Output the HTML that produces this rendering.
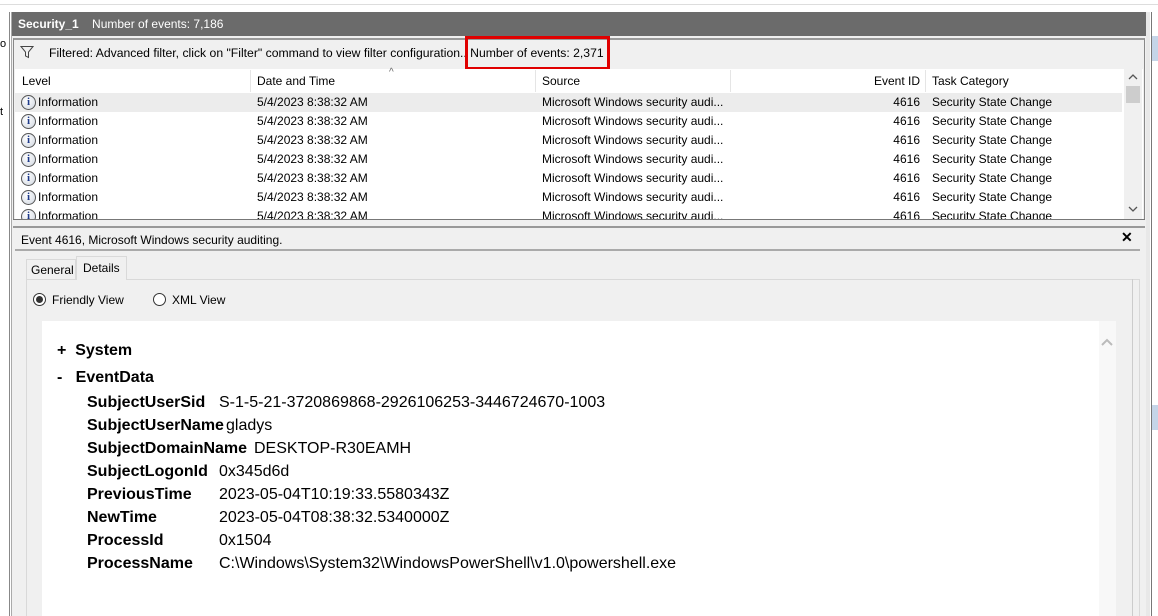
<!DOCTYPE html>
<html><head><meta charset="utf-8"><style>
*{margin:0;padding:0;box-sizing:border-box}
body{width:1158px;height:616px;overflow:hidden;background:#fff;font-family:"Liberation Sans",sans-serif;font-size:12px;color:#000;position:relative}
.a{position:absolute}
.row{position:absolute;left:15px;width:1107px;height:19px;line-height:19px}
.row span{position:absolute;white-space:nowrap}
.ic{position:absolute;left:6px;top:2px;width:15px;height:15px;border-radius:50%;border:1px solid #555;background:radial-gradient(circle at 40% 35%,#fff,#cfd6e0);color:#1e3a8a;font:bold 11px "Liberation Serif",serif;text-align:center;line-height:13px}
.k{position:absolute;left:87px;font-weight:bold;font-size:16px}
.v{position:absolute;left:219px;font-size:16px}
</style></head><body>
<div class="a" style="left:0;top:0;width:1158px;height:5px;background:#fff;border-bottom:1px solid #ddd"></div>
<div class="a" style="left:9px;top:12px;width:1px;height:604px;background:#888"></div>
<div class="a" style="left:11px;top:12px;width:1px;height:604px;background:#aaa"></div>
<div class="a" style="left:0;top:38px;font-size:11px;">o</div>
<div class="a" style="left:0;top:106px;font-size:11px;">t</div>
<div class="a" style="left:12px;top:12px;width:1134px;height:24px;background:#6b6b6b;color:#fff;line-height:24px;padding-left:6px"><b>Security_1</b>&nbsp;&nbsp;&nbsp;&nbsp;Number of events: 7,186</div>
<div class="a" style="left:1146px;top:12px;width:4px;height:604px;background:#e8e8e8"></div>
<div class="a" style="left:1151px;top:12px;width:1px;height:604px;background:#777"></div>
<div class="a" style="left:1152px;top:12px;width:6px;height:604px;background:#fff"></div>
<div class="a" style="left:1152px;top:36px;width:6px;height:25px;background:#c5d5e8"></div>
<div class="a" style="left:1152px;top:405px;width:6px;height:25px;background:#c5d5e8"></div>
<div class="a" style="left:12px;top:36px;width:1134px;height:580px;background:#f0f0f0"></div>
<div class="a" style="left:13px;top:38px;width:1132px;height:182px;border:1px solid #888;border-top:2px solid #999;background:#f0f0f0"></div>
<svg class="a" style="left:20px;top:45px" width="14" height="14" viewBox="0 0 14 14"><path d="M1 1.5H13L8.5 7V12.5L5.5 11V7Z" fill="none" stroke="#444"/></svg>
<div class="a" style="left:49px;top:46px;font-size:12.2px">Filtered: Advanced filter, click on "Filter" command to view filter configuration.. Number of events: 2,371</div>
<div class="a" style="left:465px;top:36px;width:145px;height:34px;border:3px solid #e00000"></div>
<div class="a" style="left:15px;top:69px;width:1128px;height:150px;background:#fff"></div>
<div class="a" style="left:15px;top:70px;width:1107px;height:22px;line-height:22px">
<span class="a" style="left:7px">Level</span><span class="a" style="left:242px">Date and Time</span><span class="a" style="left:527px">Source</span><span class="a" style="left:820px;width:85px;text-align:right">Event ID</span><span class="a" style="left:917px">Task Category</span>
<div class="a" style="left:235px;top:0;width:1px;height:22px;background:#e5e5e5"></div><div class="a" style="left:520px;top:0;width:1px;height:22px;background:#e5e5e5"></div><div class="a" style="left:715px;top:0;width:1px;height:22px;background:#e5e5e5"></div><div class="a" style="left:910px;top:0;width:1px;height:22px;background:#e5e5e5"></div>
<span class="a" style="left:374px;top:-8px;font-size:10px;color:#666">^</span></div>
<div class="row" style="top:93px;background:#ececec"><div class="ic">i</div><span style="left:23px">Information</span><span style="left:242px">5/4/2023 8:38:32 AM</span><span style="left:527px">Microsoft Windows security audi...</span><span style="left:820px;width:85px;text-align:right">4616</span><span style="left:917px">Security State Change</span></div>
<div class="row" style="top:112px"><div class="ic">i</div><span style="left:23px">Information</span><span style="left:242px">5/4/2023 8:38:32 AM</span><span style="left:527px">Microsoft Windows security audi...</span><span style="left:820px;width:85px;text-align:right">4616</span><span style="left:917px">Security State Change</span></div>
<div class="row" style="top:131px"><div class="ic">i</div><span style="left:23px">Information</span><span style="left:242px">5/4/2023 8:38:32 AM</span><span style="left:527px">Microsoft Windows security audi...</span><span style="left:820px;width:85px;text-align:right">4616</span><span style="left:917px">Security State Change</span></div>
<div class="row" style="top:150px"><div class="ic">i</div><span style="left:23px">Information</span><span style="left:242px">5/4/2023 8:38:32 AM</span><span style="left:527px">Microsoft Windows security audi...</span><span style="left:820px;width:85px;text-align:right">4616</span><span style="left:917px">Security State Change</span></div>
<div class="row" style="top:169px"><div class="ic">i</div><span style="left:23px">Information</span><span style="left:242px">5/4/2023 8:38:32 AM</span><span style="left:527px">Microsoft Windows security audi...</span><span style="left:820px;width:85px;text-align:right">4616</span><span style="left:917px">Security State Change</span></div>
<div class="row" style="top:188px"><div class="ic">i</div><span style="left:23px">Information</span><span style="left:242px">5/4/2023 8:38:32 AM</span><span style="left:527px">Microsoft Windows security audi...</span><span style="left:820px;width:85px;text-align:right">4616</span><span style="left:917px">Security State Change</span></div>
<div class="a" style="left:15px;top:207px;width:1107px;height:12px;overflow:hidden"><div class="row" style="top:0;left:0"><div class="ic">i</div><span style="left:23px">Information</span><span style="left:242px">5/4/2023 8:38:32 AM</span><span style="left:527px">Microsoft Windows security audi...</span><span style="left:820px;width:85px;text-align:right">4616</span><span style="left:917px">Security State Change</span></div></div>
<div class="a" style="left:1124px;top:69px;width:18px;height:150px;background:#f0f0f0"></div>
<div class="a" style="left:1126px;top:86px;width:14px;height:17px;background:#cdcdcd"></div>
<svg class="a" style="left:1128px;top:73px" width="10" height="7"><path d="M1 6L5 2L9 6" fill="none" stroke="#555" stroke-width="1.3"/></svg>
<svg class="a" style="left:1128px;top:206px" width="10" height="7"><path d="M1 1L5 5L9 1" fill="none" stroke="#555" stroke-width="1.3"/></svg>
<div class="a" style="left:13px;top:219px;width:1132px;height:1px;background:#777"></div>
<div class="a" style="left:13px;top:226px;width:1132px;height:2px;background:#999"></div>
<div class="a" style="left:21px;top:233px">Event 4616, Microsoft Windows security auditing.</div>
<div class="a" style="left:1121px;top:229px;font-weight:bold;font-size:14px">✕</div>
<div class="a" style="left:15px;top:249px;width:1125px;height:2px;background:#aaa"></div>
<div class="a" style="left:26px;top:279px;width:1114px;height:337px;border:1px solid #d9d9d9;border-bottom:none;background:#f0f0f0"></div>
<div class="a" style="left:26px;top:259px;width:50px;height:21px;border:1px solid #d9d9d9;border-bottom:none;line-height:21px;padding-left:4px">General</div>
<div class="a" style="left:76px;top:256px;width:51px;height:24px;border:1px solid #d9d9d9;border-bottom:none;background:#f0f0f0;line-height:23px;padding-left:6px">Details</div>
<div class="a" style="left:33px;top:293px;width:13px;height:13px;border:1px solid #333;border-radius:50%;background:#fff"><div style="margin:2px;width:7px;height:7px;border-radius:50%;background:#333"></div></div>
<div class="a" style="left:52px;top:293px">Friendly View</div>
<div class="a" style="left:153px;top:293px;width:13px;height:13px;border:1px solid #333;border-radius:50%;background:#fff"></div>
<div class="a" style="left:172px;top:293px">XML View</div>
<div class="a" style="left:42px;top:321px;width:1057px;height:295px;background:#fff"></div>
<div class="a" style="left:1099px;top:321px;width:17px;height:295px;background:#f8f8f8"></div>
<svg class="a" style="left:1101px;top:338px" width="12" height="9"><path d="M1 7L6 2L11 7" fill="none" stroke="#bbb" stroke-width="2"/></svg>
<div class="a" style="left:1132px;top:279px;width:1px;height:337px;background:#ccc"></div>
<div class="a" style="left:57px;top:342px;font-size:16px;font-weight:bold">+&nbsp;&nbsp;System</div>
<div class="a" style="left:57px;top:369px;font-size:16px;font-weight:bold">-&nbsp;&nbsp;&nbsp;EventData</div>
<div class="k" style="top:394px">SubjectUserSid</div><div class="v" style="top:394px">S-1-5-21-3720869868-2926106253-3446724670-1003</div>
<div class="k" style="top:417px">SubjectUserName</div><div class="v" style="top:417px;left:226px">gladys</div>
<div class="k" style="top:440px">SubjectDomainName</div><div class="v" style="top:440px;left:254px">DESKTOP-R30EAMH</div>
<div class="k" style="top:463px">SubjectLogonId</div><div class="v" style="top:463px">0x345d6d</div>
<div class="k" style="top:486px">PreviousTime</div><div class="v" style="top:486px">2023-05-04T10:19:33.5580343Z</div>
<div class="k" style="top:509px">NewTime</div><div class="v" style="top:509px">2023-05-04T08:38:32.5340000Z</div>
<div class="k" style="top:532px">ProcessId</div><div class="v" style="top:532px">0x1504</div>
<div class="k" style="top:555px">ProcessName</div><div class="v" style="top:555px">C:\Windows\System32\WindowsPowerShell\v1.0\powershell.exe</div>
</body></html>
